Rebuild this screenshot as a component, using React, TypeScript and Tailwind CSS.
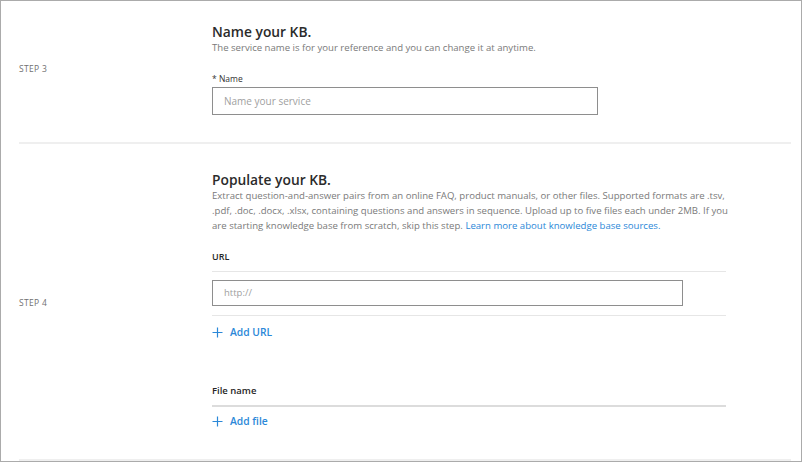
import React from "react";

function Plus() {
  return (
    <svg width="11" height="11" viewBox="0 0 11 11" className="shrink-0">
      <path d="M5.5 0.5v10M0.5 5.5h10" stroke="#2b88d8" strokeWidth="1.2" fill="none" />
    </svg>
  );
}

export default function App() {
  const font = { fontFamily: '"Open Sans", "Noto Sans", Arial, sans-serif' };
  return (
    <div
      className="w-[802px] h-[462px] border border-[#ababab] bg-white overflow-hidden pl-[18px] pr-[10px] flex flex-col"
      style={font}
    >
      {/* Step 3 */}
      <section className="flex h-[143px] shrink-0 border-b-2 border-[#efefef]">
        <div className="w-[193px] shrink-0 flex items-center pb-[5px] text-[8.5px] text-[#707070] tracking-[0.04em]">
          STEP 3
        </div>
        <div className="pt-[22px]">
          <h2 className="text-[13.8px] leading-[17px] font-semibold text-[#2b2b2b]">Name your KB.</h2>
          <p className="text-[9.6px] leading-[15px] text-[#7a7a7a]">
            The service name is for your reference and you can change it at anytime.
          </p>
          <div className="mt-[18px] text-[8.5px] leading-[12px] text-[#333]">* Name</div>
          <div className="mt-[2px] w-[386px] h-[28px] border border-[#8e8e8e] flex items-center px-[11px] text-[10px] text-[#a0a0a0]">
            Name your service
          </div>
        </div>
      </section>

      {/* Step 4 */}
      <section className="flex flex-1 border-b-2 border-[#efefef]">
        <div className="w-[193px] shrink-0 flex items-center pt-[3px] text-[8.5px] text-[#707070] tracking-[0.04em]">
          STEP 4
        </div>
        <div className="pt-[27px]">
          <h2 className="text-[13.8px] leading-[17px] font-semibold text-[#2b2b2b]">Populate your KB.</h2>
          <p className="w-[520px] whitespace-nowrap text-[9.6px] leading-[15px] text-[#7a7a7a]">
            Extract question-and-answer pairs from an online FAQ, product manuals, or other files. Supported formats are .tsv,
            <br />
            .pdf, .doc, .docx, .xlsx, containing questions and answers in sequence. Upload up to five files each under 2MB. If you
            <br />
            are starting knowledge base from scratch, skip this step.{" "}
            <span className="text-[#2b88d8]">Learn more about knowledge base sources.</span>
          </p>
          <div className="w-[514px] mt-[18px]">
            <div className="text-[9px] leading-[12px] font-semibold text-[#262626] pb-[8px] border-b border-[#e6e6e6]">URL</div>
            <div className="pt-[8px] pb-[9px] border-b border-[#e6e6e6]">
              <div className="w-[471px] h-[26px] border border-[#8e8e8e] flex items-center px-[11px] text-[9.5px] text-[#a0a0a0]">
                http://
              </div>
            </div>
            <div className="mt-[10px] flex items-center gap-[7px] text-[10.3px] leading-[13px] font-semibold text-[#2b88d8]">
              <Plus />
              Add URL
            </div>
            <div className="mt-[46px] text-[9.5px] leading-[12px] font-semibold text-[#262626] pb-[8px] border-b-2 border-[#dcdcdc]">
              File name
            </div>
            <div className="mt-[8px] flex items-center gap-[7px] text-[10.3px] leading-[13px] font-semibold text-[#2b88d8]">
              <Plus />
              Add file
            </div>
          </div>
        </div>
      </section>
    </div>
  );
}
